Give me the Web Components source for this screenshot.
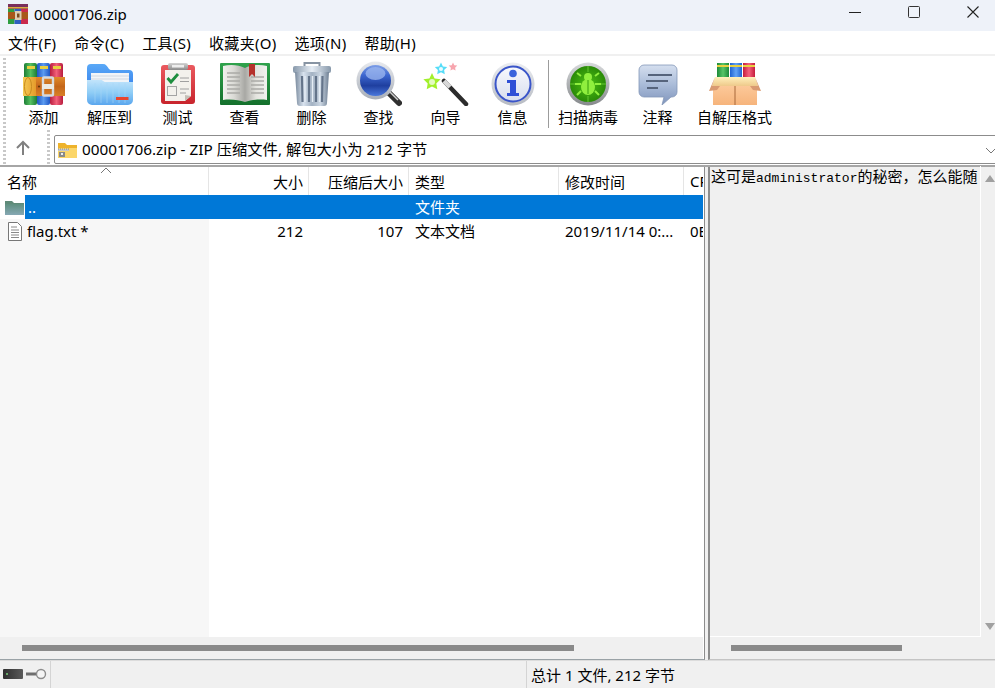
<!DOCTYPE html>
<html lang="zh">
<head>
<meta charset="utf-8">
<title>00001706.zip</title>
<style>
    html, body { margin: 0; height: 100%; overflow: hidden; }
    body { font: 15px "Noto Sans", "Noto Sans CJK SC", sans-serif; color: #000; }
</style>
</head>
<body>
<rar-window>
    <rar-titlebar slot="title">00001706.zip</rar-titlebar>
    <rar-menubar slot="menu"></rar-menubar>
    <rar-toolbar slot="tools"></rar-toolbar>
    <rar-address slot="address">00001706.zip - ZIP 压缩文件, 解包大小为 212 字节</rar-address>
    <rar-filelist slot="list"></rar-filelist>
    <rar-comment slot="comment">这可是<span>administrator</span>的秘密，怎么能随</rar-comment>
    <rar-status slot="status">总计 1 文件, 212 字节</rar-status>
</rar-window>

<script>
// little helper, all components are just a class around a style + markup string
const define = (name, css, html, setup) => {
    customElements.define(name, class extends HTMLElement {
        constructor () {
            super();
            this.attachShadow({ mode: 'open' });
            this.shadowRoot.innerHTML = `<style>${css}</style>${html}`;
            if (setup) setup(this.shadowRoot, this);
        }
    });
};

// horizontal / vertical gradient shorthand
const grad = (id, vertical, ...stops) => `<linearGradient id="${id}" x1="0" y1="0" x2="${vertical ? 0 : 1}" y2="${vertical ? 1 : 0}">` +
    stops.map((c, i) => `<stop offset="${i / (stops.length - 1)}" stop-color="${c}"/>`).join('') + `</linearGradient>`;

const star = (cx, cy, r, fill) => {
    let d = '';
    for (let i = 0; i < 10; i++) {
        const a = -Math.PI / 2 + i * Math.PI / 5;
        const q = i % 2 ? r * 0.5 : r;
        d += `${i ? 'L' : 'M'}${(cx + q * Math.cos(a)).toFixed(1)} ${(cy + q * Math.sin(a)).toFixed(1)}`;
    }
    return `<path d="${d}z" fill="${fill}"/>`;
};

const icons = {
    add: `<svg viewBox="0 0 42 44" width="42" height="44"><defs>
        ${grad('g', 0, '#1d7d35', '#55c060', '#1d7d35')}${grad('b', 0, '#1f55c4', '#5a9bf0', '#1f55c4')}${grad('r', 0, '#b81c3e', '#f2607a', '#b81c3e')}
        ${grad('belt', 1, '#e08a2a', '#c4661a', '#d98027')}${grad('cl', 0, '#f5cc55', '#e59a2a')}</defs>
        <rect x="1" y="1" width="13" height="42" rx="2" fill="url(#g)"/><rect x="14" y="1" width="13" height="42" rx="2" fill="url(#b)"/><rect x="27" y="1" width="13" height="42" rx="2" fill="url(#r)"/>
        <rect x="4" y="4" width="8" height="3" fill="#e8d040"/><rect x="17" y="4" width="8" height="3" fill="#e8d040"/><rect x="30" y="4" width="8" height="3" fill="#e8d040"/>
        <rect x="0" y="15" width="42" height="19" fill="url(#belt)"/><rect x="0" y="15" width="13" height="19" fill="url(#cl)"/><ellipse cx="5" cy="24.500" rx="3.500" ry="9" fill="none" stroke="#c98a20"/>
        <circle cx="16" cy="24.500" r="1" fill="#5a3208"/><rect x="20" y="15.500" width="10" height="18" rx="1" fill="none" stroke="#d5d8dc" stroke-width="2.400"/><rect x="19" y="22" width="12" height="5" fill="#eceae4"/></svg>`,
    extract: `<svg viewBox="0 0 46 42" width="46" height="42"><defs>
        ${grad('back', 1, '#5aa9f7', '#2f78ea')}${grad('front', 1, '#c2e4fb', '#8fcdf6', '#5aa6ee')}</defs>
        <path d="M0 5a4 4 0 0 1 4-4h12c3 0 4 2 6 5 1 1 2 1 3 1h17a4 4 0 0 1 4 4v20H0z" fill="url(#back)"/>
        <rect x="4" y="10" width="38" height="12" fill="#f1f4f8"/><path d="M4 13h38M4 16h38" stroke="#d0d8e2"/>
        <path d="M0 17h14c2 0 2 2 5 2h27v18a5 5 0 0 1-5 5H5a5 5 0 0 1-5-5z" fill="url(#front)"/>
        <path d="M8 20v20M14 20v20M20 20v20M26 20v20M32 20v20M38 20v20" stroke="#a9d8f8" stroke-width=".8" opacity=".7"/>
        <rect x="29" y="34" width="12.500" height="3" fill="#e8452e"/></svg>`,
    test: `<svg viewBox="0 0 36 42" width="36" height="42"><defs>${grad('fr', 1, '#ea5a5f', '#c8242c')}${grad('cl', 1, '#d4d4d4', '#8a8a8a')}</defs>
        <rect x="1" y="2" width="34" height="39" rx="3" fill="url(#fr)"/><path d="M5 7h26v26l-6 5H5z" fill="#f3f1ec"/><path d="M31 33l-6 5v-6z" fill="#c4bfb6"/>
        <rect x="8" y="0" width="20" height="7" rx="2" fill="url(#cl)"/><rect x="12" y="2" width="12" height="2.500" fill="#eee"/>
        <path d="M7.500 15l3.500 4 7-8" fill="none" stroke="#1e8e3e" stroke-width="2.800"/><path d="M20 15h9M20 18.500h9" stroke="#a0a0a0"/>
        <rect x="7.500" y="23.500" width="9" height="9" fill="none" stroke="#a4a4a4"/><path d="M20 26h9M20 30h6" stroke="#a0a0a0"/></svg>`,
    view: `<svg viewBox="0 0 50 42" width="50" height="42"><defs>${grad('pg', 0, '#f1f1ee', '#dadad5', '#a8a8a4', '#e4e4df', '#f1f1ee')}${grad('cv', 1, '#2fa24c', '#14702c')}</defs>
        <rect x="0" y="0" width="50" height="42" rx="1" fill="url(#cv)"/><path d="M3 3c8-2 16-1 22 2 6-3 14-4 22-2v34c-8-1-16 0-22 2-6-2-14-3-22-2z" fill="url(#pg)"/>
        <path d="M7 10h13M7 14h13M7 18h13M7 22h13M7 26h13M7 30h13M31 14h13M31 18h13M31 22h13M31 26h13M31 30h13" stroke="#aaaaa6" stroke-width="1.300"/>
        <path d="M29 1h6v13l-3-3-3 3z" fill="#b5322c"/></svg>`,
    del: `<svg viewBox="0 0 38 44" width="38" height="44"><defs>${grad('s', 0, '#78899c', '#d8e2ee', '#a3b2c3', '#cbd6e2', '#6f8094')}${grad('l', 0, '#8899ab', '#e6edf5', '#8899ab')}</defs>
        <path d="M11.500 4V1h15v3" fill="none" stroke="#8794a3" stroke-width="2"/><rect x="0" y="4" width="38" height="7" rx="2" fill="url(#l)"/>
        <path d="M2 10h34l-2 31a3 3 0 0 1-3 3H7a3 3 0 0 1-3-3z" fill="url(#s)"/><path d="M9 14l.5 26M16 14v26M23 14v26M29.500 14l-.5 26" stroke="#64748a" stroke-width="2.200"/><path d="M12 14v26M19.500 14v26M26.500 14v26" stroke="#e6edf5" stroke-width="1.300"/></svg>`,
    find: `<svg viewBox="0 0 46 46" width="46" height="46"><defs>${grad('ring', 1, '#e8eaee', '#a9afb8')}${grad('lens', 1, '#7fa0e8', '#3c66cf', '#1f3f9f', '#4a78dc')}</defs>
        <path d="M31 30l12 12" stroke="#303030" stroke-width="6" stroke-linecap="round"/><path d="M33 30l9 9" stroke="#cfcfcf" stroke-width="1.500"/>
        <circle cx="19.500" cy="19.500" r="19" fill="url(#ring)"/><circle cx="19.500" cy="19.500" r="15.500" fill="url(#lens)"/><ellipse cx="19.500" cy="12.500" rx="10" ry="6.500" fill="#9db8ef" opacity=".75"/></svg>`,
    wizard: `<svg viewBox="0 0 46 44" width="46" height="44">
        <path d="M21 19l22 23" stroke="#2c2c2c" stroke-width="4.500" stroke-linecap="round"/><path d="M21 19l6 6" stroke="#d8d8d8" stroke-width="4.500"/>
        ${star(9, 20, 9, '#a2f02c')}<circle cx="9" cy="20" r="3" fill="#e3fbc0"/>${star(18, 7, 6.500, '#55ddf8')}<circle cx="18" cy="7" r="2" fill="#e9fcff"/>${star(30, 5, 4.500, '#f7a5ae')}</svg>`,
    info: `<svg viewBox="0 0 44 44" width="44" height="44"><defs>${grad('ring', 1, '#eceef2', '#b6bac2')}${grad('in', 1, '#f8f9fd', '#d8deee')}</defs>
        <circle cx="22" cy="22" r="21.500" fill="url(#ring)"/><circle cx="22" cy="22" r="17.500" fill="url(#in)" stroke="#3a55c9" stroke-width="2"/>
        <circle cx="22" cy="11.500" r="3.800" fill="#3a63dc"/><path d="M16 18h9v13h3v3H16v-3h3V21h-3z" fill="#2f4fd6"/></svg>`,
    scan: `<svg viewBox="0 0 44 44" width="44" height="44"><defs>${grad('ring', 1, '#d8dadc', '#86898c')}<radialGradient id="sc"><stop offset="0" stop-color="#4cc014"/><stop offset="1" stop-color="#2a8a08"/></radialGradient></defs>
        <circle cx="22" cy="22" r="21.500" fill="url(#ring)"/><circle cx="22" cy="22" r="18" fill="url(#sc)"/>
        <path d="M22 4v6M22 34v6M4 22h5M35 22h5" stroke="#66c834"/><ellipse cx="22" cy="25" rx="7" ry="8" fill="#90ef3e"/><circle cx="22" cy="15" r="4" fill="#90ef3e"/>
        <path d="M15 14l-4-3M29 14l4-3M15 22H9M29 22h6M15 29l-4 4M29 29l4 4" stroke="#90ef3e" stroke-width="2"/><path d="M22 18v14" stroke="#349c0c"/></svg>`,
    comment: `<svg viewBox="0 0 40 41" width="40" height="41"><defs>${grad('bb', 1, '#d5dfef', '#a9bbd8', '#7f94bb')}</defs>
        <path d="M6 1h28a5 5 0 0 1 5 5v22a5 5 0 0 1-5 5h-1l-9 8 2-8H6a5 5 0 0 1-5-5V6a5 5 0 0 1 5-5z" fill="url(#bb)" stroke="#8497b8" stroke-width=".8"/>
        <path d="M10 11h24M8 17h22M9 24h11" stroke="#56647c" stroke-width="2.200"/></svg>`,
    sfx: `<svg viewBox="0 0 52 42" width="52" height="42"><defs>${grad('g', 0, '#1d8a38', '#58c468', '#1d8a38')}${grad('b', 0, '#1f62d0', '#62a3f5', '#1f62d0')}${grad('r', 0, '#c41c3c', '#f4607c', '#c41c3c')}${grad('box', 1, '#fcc898', '#f6b47c')}${grad('top', 1, '#fff0bc', '#eec98a')}</defs>
        <rect x="8" y="0" width="12" height="18" fill="url(#g)"/><rect x="21" y="0" width="12" height="18" fill="url(#b)"/><rect x="34" y="0" width="12" height="18" fill="url(#r)"/>
        <path d="M8 3h12M21 3h12M34 3h12" stroke="#e8d040" stroke-width="2"/>
        <path d="M4 23h44v19H4z" fill="url(#box)"/><path d="M6 14h40l3 9H3z" fill="url(#top)"/><path d="M6 14L0 28l8-1 3-4H3z" fill="#d99a72"/><path d="M46 14l6 14-8-1-3-4h8z" fill="#d99a72"/>
        <path d="M26 23v19" stroke="#a8683a"/></svg>`,
};

// all icons land in one shadow root, so their gradient ids need a prefix
const iconSvg = (name) => icons[name].replace(/id="/g, `id="${name}-`).replace(/url\(#/g, `url(#${name}-`);

define('rar-window', `
    :host { display: grid; grid-template-rows: 31px 25px 74px 35px 495px 28px; height: 688px; width: 995px; background: #fff; overflow: hidden; }
    .main { display: grid; grid-template-columns: 705px 1fr; background: #f0f0f0; border-top: 2px solid #a6a6a6; min-height: 0; }
`, `
    <slot name="title"></slot><slot name="menu"></slot><slot name="tools"></slot><slot name="address"></slot>
    <div class="main"><slot name="list"></slot><slot name="comment"></slot></div>
    <slot name="status"></slot>
`);

define('rar-titlebar', `
    :host { display: flex; align-items: center; background: #eef2f9; font-size: 15px; overflow: hidden; }
    .logo { margin: -3px 6px 0 8px; display: block; flex: none; }
    .t { flex: 1; margin-top: -4px; }
    .btns { display: flex; align-self: flex-start; margin-right: -7px; }
    .b { width: 59px; height: 24px; display: grid; place-items: center; }
`, `
    <svg class="logo" width="20" height="20" viewBox="0 0 20 20">
        <rect x="0" y="0" width="6.500" height="20" fill="#2f9e3f"/><rect x="6.500" y="0" width="6.500" height="20" fill="#2f5fc0"/><rect x="13" y="0" width="7" height="20" fill="#c92a4c"/>
        <rect x="0" y="0" width="20" height="5" fill="#7a2f5c"/><rect x="0" y="3" width="20" height="1.500" fill="#d8b040"/>
        <rect x="0" y="8" width="20" height="7" fill="#a8571a"/><rect x="7" y="7" width="6.500" height="9" fill="#dccdb0"/><rect x="9" y="9.500" width="2.500" height="4" fill="#7a4a20"/></svg>
    <span class="t"><slot></slot></span>
    <div class="btns">
        <div class="b"><svg width="14" height="14"><path d="M1 7.500h12" stroke="#222"/></svg></div>
        <div class="b"><svg width="14" height="14"><rect x="1.500" y="1.500" width="11" height="11" rx="1" fill="none" stroke="#333"/></svg></div>
        <div class="b"><svg width="14" height="14"><path d="M1.500 1.500l11 11M12.500 1.500l-11 11" stroke="#222" stroke-width="1.100"/></svg></div>
    </div>
`);

define('rar-menubar', `
    :host { display: flex; gap: 18px; padding: 0 0 0 8px; height: 23px; align-items: center; background: #fff; border-bottom: 2px solid #f0f0f0; font-size: 15px; letter-spacing: .3px; }
`, ['文件(F)', '命令(C)', '工具(S)', '收藏夹(O)', '选项(N)', '帮助(H)'].map((m) => `<span>${m}</span>`).join(''));

define('rar-tool', `
    :host { display: flex; flex-direction: column; align-items: center; min-width: 67px; padding: 0 6px; box-sizing: border-box; font-size: 15px; }
    .i { height: 46px; margin-top: 1px; display: flex; align-items: center; justify-content: center; }
    span { line-height: 20px; white-space: nowrap; }
`, `<div class="i"><slot name="icon"></slot></div><span><slot></slot></span>`);

define('rar-toolbar', `
    :host { display: flex; background: #fff; padding: 4px 0 0 3px; box-sizing: border-box; }
    .grip { width: 3px; height: 70px; margin-right: 4px; margin-top: -2px; background: repeating-linear-gradient(#c8c8c8 0 2px, transparent 2px 4px); }
    .sep { width: 1px; height: 68px; background: #9c9c9c; margin: 0 3px 0 2px; }
    .set { display: flex; }
    svg { display: block; }
`, `
    <div class="grip"></div>
    <div class="set" id="main-tools"></div>
    <div class="sep"></div>
    <div class="set" id="extra-tools"></div>
`, (root) => {
    const add = (id, list) => {
        root.getElementById(id).innerHTML = list.map(([icon, label, style]) =>
            `<rar-tool style="${style || ''}"><span slot="icon" style="display:block">${iconSvg(icon)}</span>${label}</rar-tool>`).join('');
    };
    add('main-tools', [['add', '添加'], ['extract', '解压到', 'margin:0 1px 0 -1px'], ['test', '测试'], ['view', '查看'], ['del', '删除'], ['find', '查找'], ['wizard', '向导'], ['info', '信息']]);
    add('extra-tools', [['scan', '扫描病毒'], ['comment', '注释'], ['sfx', '自解压格式']]);
});

define('rar-address', `
    :host { display: flex; align-items: flex-start; background: #fff; }
    .grip { width: 3px; height: 34px; background: repeating-linear-gradient(#c8c8c8 0 2px, transparent 2px 4px); }
    .up { width: 33px; height: 35px; margin-right: 8px; display: grid; place-items: center; }
    .box { flex: 1; height: 27px; margin: 5px -2px 0 4px; display: flex; align-items: center; border: 1px solid #8c8c8c; background: #fff; border-radius: 2px; font-size: 15.300px; }
    .zip { margin: 0 5px 0 3px; }
    .t { flex: 1; margin-top: -4px; }
`, `
    <div class="grip" style="margin-left:3px"></div>
    <div class="up"><svg width="16" height="16" viewBox="0 0 16 16"><path d="M8 15V2M2 8l6-6 6 6" fill="none" stroke="#808080" stroke-width="2"/></svg></div>
    <div class="grip"></div>
    <div class="box">
        <svg class="zip" width="19" height="16" viewBox="0 0 19 16"><path d="M0 1h7l2 2h10v13H0z" fill="#eeb32c"/><path d="M0 6h19v10H0z" fill="#fbd66a"/><path d="M0 7h11v2H0z" fill="#c8c8c8"/><path d="M0 7h11" stroke="#888" stroke-dasharray="1 1"/><path d="M1 10h6v5H1z" fill="#8a8a8a"/><path d="M3 11h2v2H3z" fill="#eee"/></svg>
        <span class="t"><slot></slot></span>
        <svg width="14" height="14" style="margin-right:-3px"><path d="M1 5l5 5 5-5" fill="none" stroke="#777"/></svg>
    </div>
`);

define('rar-filelist', `
    :host { display: flex; flex-direction: column; min-height: 0; background: #fff; font-size: 15px; padding-right: 1px; border-right: 1px solid #8c8c8c; border-bottom: 1px solid #9aa2a6; overflow: hidden; position: relative; }
    .head, .row { display: grid; grid-template-columns: 209px 100px 100px 150px 125px 1fr; white-space: nowrap; }
    .head { height: 28px; align-items: center; }
    .head div { height: 100%; box-sizing: border-box; padding: 0 5px 0 6px; border-right: 1px solid #e5e5e5; display: flex; align-items: center; position: relative; overflow: hidden; }
    .head .r { justify-content: flex-end; }
    .head .s { overflow: visible; padding-left: 7px; }
    .caret { position: absolute; left: 100px; top: 0; }
    .body { flex: 1; min-height: 0; background: linear-gradient(90deg, #f7f7f7 209px, #fff 209px); }
    .row { height: 24px; align-items: center; }
    .row div { padding: 0 6px 0 6px; overflow: hidden; }
    .row .r { text-align: right; }
    .row .z { padding-bottom: 2px; }
    .n { display: flex; align-items: center; gap: 3px; padding-left: 5px !important; }
    .row.sel { background: linear-gradient(90deg, #fff 25px, #0078d7 25px); color: #fff; }
    .row.sel .n { gap: 4px; }
    .bar { height: 22px; background: #f0f0f0; padding-top: 8px; box-sizing: border-box; flex: none; }
    .bar i { display: block; margin-left: 22px; width: 552px; height: 6px; background: #8a8a8a; }
`, `
    <div class="head">
        <div class="s">名称<svg class="caret" width="12" height="7"><path d="M1 6l5-5 5 5" fill="none" stroke="#777"/></svg></div>
        <div class="r">大小</div><div class="r">压缩后大小</div><div>类型</div><div>修改时间</div><div style="border:0">CRC32</div>
    </div>
    <div class="body">
        <div class="row sel">
            <div class="n"><svg width="19" height="15" viewBox="0 0 19 15"><defs><linearGradient id="f" x1="0" y1="0" x2="0" y2="1"><stop offset="0" stop-color="#5f8f7f"/><stop offset="1" stop-color="#86a8b4"/></linearGradient></defs><path d="M0 1h7l2 2h10v12H0z" fill="#5f8a78"/><path d="M0 4h19v11H0z" fill="url(#f)"/></svg><span>..</span></div>
            <div></div><div></div><div class="z">文件夹</div><div></div><div></div>
        </div>
        <div class="row">
            <div class="n"><svg width="16" height="19" viewBox="0 0 16 19" style="margin:0 1px 0 2px"><path d="M1.500 .5h9l4 4v14h-13z" fill="#fff" stroke="#777"/><path d="M4 5h6M4 8h8M4 10.500h8M4 13h8M4 15.500h8" stroke="#888"/></svg><span>flag.txt *</span></div>
            <div class="r">212</div><div class="r">107</div><div class="z">文本文档</div><div>2019/11/14 0:...</div><div>0E</div>
        </div>
    </div>
    <div class="bar"><i></i></div>
`);

define('rar-comment', `
    :host { display: grid; grid-template-columns: 1fr 14px; grid-template-rows: 1fr 22px; background: #f0f0f0; border-left: 2px solid #8c8c8c; margin: 0 0 0 3px; min-height: 0; border-bottom: 1px solid #c4c4c4; }
    .txt { padding: 0 0 0 1px; font: 400 15px/20px "Noto Sans CJK SC", sans-serif; margin-top: -1px; white-space: nowrap; overflow: hidden; border-right: 1px solid #fff; border-bottom: 1px solid #fff; }
    ::slotted(span) { font: 13px "Liberation Mono", monospace; }
    .vs { display: flex; flex-direction: column; justify-content: space-between; align-items: center; padding: 8px 0 7px 4px; }
    .hs { grid-column: 1 / 3; padding: 8px 0 0 21px; }
    .hs i { display: block; width: 171px; height: 6px; background: #8a8a8a; }
`, `
    <div class="txt"><slot></slot></div>
    <div class="vs">
        <svg width="10" height="7"><path d="M5 0l5 7H0z" fill="#a0a0a0"/></svg>
        <svg width="10" height="7"><path d="M0 0h10L5 7z" fill="#a0a0a0"/></svg>
    </div>
    <div class="hs"><i></i></div>
`);

define('rar-status', `
    :host { display: grid; grid-template-columns: 51px 476px 1fr; background: #f0f0f0; border-top: 1px solid #dcdcdc; box-sizing: border-box; font-size: 15px; }
    div { display: flex; align-items: center; border-right: 1px solid #d4d4d4; }
    .t { padding-left: 4px; border: 0; }
`, `
    <div style="gap:3px;padding:0 0 2px 3px">
        <svg width="20" height="10"><defs><linearGradient id="d" x1="0" y1="0" x2="1" y2="0"><stop offset="0" stop-color="#2e2e2e"/><stop offset="1" stop-color="#5a5a5a"/></linearGradient></defs><rect width="20" height="10" rx="1" fill="url(#d)"/><circle cx="4" cy="5" r="1" fill="#7c7"/></svg>
        <svg width="21" height="12" viewBox="0 0 21 12"><path d="M0 4.500h12v3H0z" fill="#6e6e6e"/><circle cx="15" cy="6" r="4.500" fill="#f4f4f4" stroke="#8c8c8c" stroke-width="1.400"/></svg>
    </div>
    <div></div>
    <div class="t"><slot></slot></div>
`);
</script>
</body>
</html>
